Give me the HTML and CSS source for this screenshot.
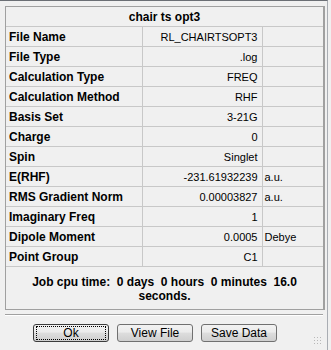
FILE: index.html
```html
<!DOCTYPE html>
<html lang="en">
<head>
    <meta charset="UTF-8">
    <meta name="viewport" content="width=device-width, initial-scale=1.0">
    <title>chair ts opt3</title>
    <link rel="stylesheet" href="styles.css">
</head>
<body>
  <div class="dialog">
    <div class="panel">
      <table class="summary">
        <colgroup>
          <col class="col-label">
          <col class="col-value">
          <col class="col-unit">
        </colgroup>
        <thead>
          <tr><th colspan="3">chair ts opt3</th></tr>
        </thead>
        <tbody>
          <tr><td class="label">File Name</td><td class="value">RL_CHAIRTSOPT3</td><td class="unit"></td></tr>
          <tr><td class="label">File Type</td><td class="value">.log</td><td class="unit"></td></tr>
          <tr><td class="label">Calculation Type</td><td class="value">FREQ</td><td class="unit"></td></tr>
          <tr><td class="label">Calculation Method</td><td class="value">RHF</td><td class="unit"></td></tr>
          <tr><td class="label">Basis Set</td><td class="value">3-21G</td><td class="unit"></td></tr>
          <tr><td class="label">Charge</td><td class="value">0</td><td class="unit"></td></tr>
          <tr><td class="label">Spin</td><td class="value">Singlet</td><td class="unit"></td></tr>
          <tr><td class="label">E(RHF)</td><td class="value">-231.61932239</td><td class="unit">a.u.</td></tr>
          <tr><td class="label">RMS Gradient Norm</td><td class="value">0.00003827</td><td class="unit">a.u.</td></tr>
          <tr><td class="label">Imaginary Freq</td><td class="value">1</td><td class="unit"></td></tr>
          <tr><td class="label">Dipole Moment</td><td class="value">0.0005</td><td class="unit">Debye</td></tr>
          <tr><td class="label">Point Group</td><td class="value">C1</td><td class="unit"></td></tr>
        </tbody>
      </table>
      <div class="cpu-time">Job cpu time:  0 days  0 hours  0 minutes  16.0 seconds.</div>
    </div>

    <div class="separator"></div>

    <div class="buttons">
      <button class="btn btn-default"><span class="focus">Ok</span></button>
      <button class="btn">View File</button>
      <button class="btn">Save Data</button>
    </div>
    <div class="grip"></div>
  </div>
</body>
</html>
```

FILE: styles.css
```css
html, body {
    margin: 0;
    padding: 0;
    background-color: #f0f0f0;
}

body {
    font-family: "Liberation Sans", Arial, sans-serif;
    font-size: 11px;
    color: #000;
}

.dialog {
    position: relative;
    width: 327px;
    height: 349px;
    border-top: 1px solid #6b6f75;
    border-right: 1px solid #a9adb3;
    background-color: #f0f0f0;
    overflow: hidden;
}

.panel {
    margin: 5px 0 0 5px;
    width: 317px;
    border: 1px solid #a0a0a0;
    border-right: 2px solid #a0a0a0;
}

.summary {
    border-collapse: collapse;
    width: 317px;
    table-layout: fixed;
}

.col-label { width: 136px; }
.col-value { width: 120px; }
.col-unit { width: 61px; }

.summary th {
    height: 19px;
    padding: 0;
    font-size: 12px;
    font-weight: bold;
    text-align: center;
    border-bottom: 1px solid #c8c8c8;
}

.summary td {
    height: 19px;
    padding: 0 4px 0 3px;
    border-bottom: 1px solid #c8c8c8;
    border-right: 1px solid #c8c8c8;
    white-space: nowrap;
    overflow: hidden;
}

.summary td.label {
    font-size: 12px;
    font-weight: bold;
}

.summary td.value {
    text-align: right;
}

.summary td.unit {
    border-right: none;
    padding-left: 2px;
}

.cpu-time {
    height: 42px;
    box-sizing: border-box;
    padding: 8px 22px 0 22px;
    font-size: 12px;
    font-weight: bold;
    line-height: 14px;
    text-align: center;
    white-space: pre-wrap;
}

.separator {
    margin: 4px 4px 0 5px;
    border-top: 1px solid #a0a0a0;
    border-bottom: 1px solid #ffffff;
}

.buttons {
    display: flex;
    gap: 9px;
    padding: 8px 0 0 33px;
}

.btn {
    width: 76px;
    height: 18px;
    padding: 0;
    font-family: "Liberation Sans", Arial, sans-serif;
    font-size: 12px;
    color: #000;
    border: 1px solid #707070;
    border-radius: 3px;
    background: linear-gradient(#f2f2f2 0%, #ebebeb 45%, #dddddd 50%, #cfcfcf 100%);
}

.btn + .btn {
    margin-left: -1px;
}

.btn-default {
    border-color: #3c3c3c;
}

.btn-default .focus {
    display: block;
    margin: 0 2px;
    height: 12px;
    line-height: 12px;
    border: 1px dotted #000;
}

.grip {
    position: absolute;
    right: 6px;
    bottom: 6px;
    width: 8px;
    height: 8px;
    background-image: radial-gradient(circle, #b8b8b8 0.8px, transparent 1px);
    background-size: 3px 3px;
}
```
